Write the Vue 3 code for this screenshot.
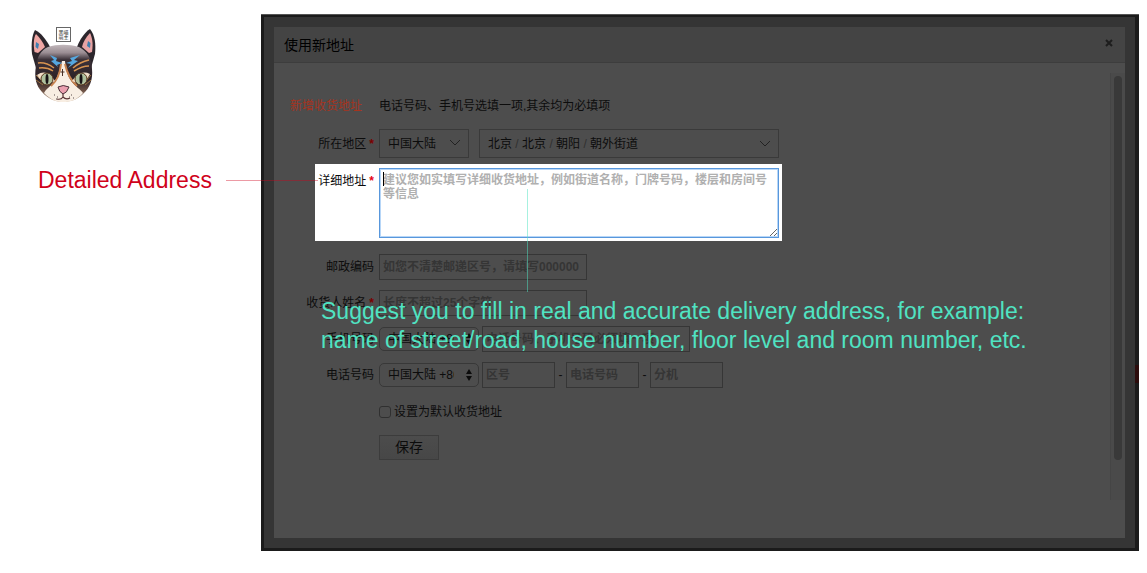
<script setup>
import { ref } from 'vue'

const region = ref('cn')
const mobileCode = ref('86')
const phoneCode = ref('86')
const address = ref('')
const zip = ref('')
const receiver = ref('')
const mobile = ref('')
const asDefault = ref(false)
const area = ['北京', '北京', '朝阳', '朝外街道']
const phoneParts = [
  { id: 'area-code', hint: '区号' },
  { id: 'phone-number', hint: '电话号码' },
  { id: 'extension', hint: '分机' },
]
</script>

<template>
  <div class="page">
    <aside class="side">
      <svg class="logo" viewBox="0 0 90 90" role="img" aria-label="logo">
        <defs>
          <linearGradient id="fur" x1="0" y1="0" x2="0" y2="1">
            <stop offset="0" stop-color="#c2b8bc" />
            <stop offset="0.14" stop-color="#9a8d93" />
            <stop offset="0.26" stop-color="#3c3239" />
            <stop offset="0.6" stop-color="#2b2026" />
            <stop offset="0.8" stop-color="#6b5044" />
            <stop offset="1" stop-color="#d9c4ae" />
          </linearGradient>
        </defs>
        <path d="M12 34C11 24 12 15 15 10C21 13 26 19 30 27L24 40L16 48Z" fill="#2c262c" />
        <path d="M14.500 32C13 23 14 17 16 14C20 18 23 22 25 27L18 33Z" fill="#efa6a4" />
        <path d="M16 22L19 24L18 29L15.500 27Z" fill="#3f7fb0" />
        <path d="M75 34C76 24 75 15 70 9C65 12 60 19 57 27L63 40L71 48Z" fill="#2c262c" />
        <path d="M72 32C73.500 23 72 17 70 13C66 17 63 22 62 27L69 33Z" fill="#e8a3a4" />
        <path d="M68 21L70.500 23L70 28L67 26Z" fill="#3f7fb0" />
        <path d="M28 27C37 24 49 24 59 27C67 31 72 39 72 49C73 59 70 68 63 74C57 80 50 82 43 82C36 82 28 79 22 72C16 66 14 57 16 46C17 37 21 30 28 27Z" fill="url(#fur)" />
        <path d="M42 41C40 50 38 57 33 64C29 67 26 69 24 73C31 80 37 82 43 82C50 82 57 80 63 73C60 69 56 67 52 62C47 55 46 49 45 41Z" fill="#f8eee3" />
        <path d="M41 44C40 54 37 61 31 66M45 44C47 53 50 60 57 66" fill="none" stroke="#c88350" stroke-width="2" />
        <path d="M30 35L37 38L36 41L42 43L37 45L38 47L31 41L34 40Z" fill="#55a7df" />
        <path d="M60 35L50 38L52 41L46 43L51 44L48 48L58 41L54 40Z" fill="#55a7df" />
        <path d="M34 48Q26 42 18 43M33 51Q27 47 19 48M53 48Q60 42 69 40M54 51Q62 46 69 46" fill="none" stroke="#d79350" stroke-width="1.500" />
        <path d="M16 55L22 61M16 60L23 65M71 55L66 61M71 60L65 65" stroke="#9a713f" stroke-width="1" />
        <path d="M17 55Q27 48 35 61Q25 68 17 55Z" fill="#f1ddc7" />
        <path d="M52 61Q60 49 70 54Q64 67 52 61Z" fill="#f1ddc7" />
        <circle cx="27" cy="59" r="6" fill="#aebf9d" stroke="#57381f" stroke-width="1" />
        <circle cx="61" cy="59" r="6" fill="#aebf9d" stroke="#57381f" stroke-width="1" />
        <ellipse cx="27" cy="59" rx="1.500" ry="5" fill="#171214" />
        <ellipse cx="61" cy="59" rx="1.500" ry="5" fill="#171214" />
        <path d="M42.500 49V56M40.500 52H44.500" stroke="#493127" stroke-width="1" />
        <path d="M38 67Q43 64 49 67Q47 73 43 74Q39 72 38 67Z" fill="#eaa0af" stroke="#493038" stroke-width="1" />
        <path d="M43 74V77M37 79Q41 80 43 77Q46 80 50 78" fill="none" stroke="#5a3537" stroke-width="1.200" />
        <path d="M34 75H35M37 77H38M36 79H37M51 75H52M53 78H54M49 77H50" stroke="#594b4b" stroke-width="1" />
        <rect x="36.500" y="7.500" width="14" height="14" fill="#fff" stroke="#666" />
        <text x="43.500" y="14" class="seal">黑喵</text>
        <text x="43.500" y="19" class="seal">萌主</text>
      </svg>
      <div class="callout">
        <span class="callout-text">Detailed Address</span>
        <span class="callout-line"></span>
      </div>
    </aside>

    <main class="backdrop">
      <span class="stray"></span>
      <section class="dialog">
        <header class="dialog-head">
          <h1>使用新地址</h1>
          <button class="close" type="button" aria-label="关闭">
            <svg viewBox="0 0 8 8" width="8" height="8"><path d="M1 1L7 7M7 1L1 7" stroke="#1d1d1d" stroke-width="2" /></svg>
          </button>
        </header>
        <div class="dialog-body">
          <form class="form" @submit.prevent>
            <p class="intro"><span class="intro-tag">新增收货地址</span><span>电话号码、手机号选填一项,其余均为必填项</span></p>

            <div class="row region">
              <label for="region">所在地区<i>*</i></label>
              <div class="fields wide">
                <span class="picker">
                  <select id="region" v-model="region"><option value="cn">中国大陆</option></select>
                  <svg class="chevron" viewBox="0 0 12 7" width="12" height="7"><path d="M1 1L6 6L11 1" /></svg>
                </span>
                <button class="area" type="button">
                  <span><template v-for="(a, i) in area" :key="i"><em v-if="i"> / </em>{{ a }}</template></span>
                  <svg class="chevron" viewBox="0 0 12 7" width="12" height="7"><path d="M1 1L6 6L11 1" /></svg>
                </button>
              </div>
            </div>

            <div class="row detail">
              <label for="address">详细地址<i>*</i></label>
              <div class="detail-field">
                <textarea id="address" v-model="address" placeholder="建议您如实填写详细收货地址，例如街道名称，门牌号码，楼层和房间号等信息"></textarea>
                <span class="caret"></span>
                <span class="note-line"></span>
              </div>
              <p class="note">Suggest you to fill in real and accurate delivery address, for example:<br />name of street/road, house number, floor level and room number, etc.</p>
            </div>

            <div class="row">
              <label for="zip">邮政编码</label>
              <div class="fields"><input id="zip" v-model="zip" type="text" placeholder="如您不清楚邮递区号，请填写000000" /></div>
            </div>
            <div class="row">
              <label for="receiver">收货人姓名<i>*</i></label>
              <div class="fields"><input id="receiver" v-model="receiver" type="text" placeholder="长度不超过25个字符" /></div>
            </div>
            <div class="row">
              <label for="mobile">手机号码</label>
              <div class="fields">
                <span class="code">
                  <select v-model="mobileCode" aria-label="手机国家代码"><option value="86">中国大陆 +86</option></select>
                  <svg viewBox="0 0 6 12" width="6" height="12"><path d="M3 0L6 5H0ZM0 7H6L3 12Z" /></svg>
                </span>
                <input id="mobile" v-model="mobile" type="text" placeholder="电话号码、手机号码必须填一项" />
              </div>
            </div>
            <div class="row">
              <label for="area-code">电话号码</label>
              <div class="fields">
                <span class="code">
                  <select v-model="phoneCode" aria-label="电话国家代码"><option value="86">中国大陆 +86</option></select>
                  <svg viewBox="0 0 6 12" width="6" height="12"><path d="M3 0L6 5H0ZM0 7H6L3 12Z" /></svg>
                </span>
                <template v-for="(p, i) in phoneParts" :key="p.id">
                  <span v-if="i" class="dash">-</span>
                  <input :id="p.id" class="short" type="text" :placeholder="p.hint" :aria-label="p.hint" />
                </template>
              </div>
            </div>
            <div class="default">
              <input id="default" v-model="asDefault" type="checkbox" />
              <label for="default">设置为默认收货地址</label>
            </div>
            <button class="save" type="submit">保存</button>
          </form>
          <div class="track"><div class="thumb"></div></div>
        </div>
      </section>
    </main>
  </div>
</template>

<style>
body {
  margin: 0;
  background: #fff;
}
</style>

<style scoped>
* {
  box-sizing: border-box;
}
.page {
  display: flex;
  min-height: 100vh;
  font: 12px/20px "Liberation Sans", "Noto Sans CJK SC", sans-serif;
  color: #0c0c0c;
}
button, input, select, textarea {
  font: inherit;
  color: inherit;
  margin: 0;
  border-radius: 0;
  outline: none;
}
.side {
  flex: 0 0 261px;
  padding-top: 20px;
}
.logo {
  display: block;
  width: 90px;
  height: 90px;
  margin-left: 20px;
}
.seal {
  font: 5px "Noto Sans CJK SC", sans-serif;
  text-anchor: middle;
  fill: #222;
}
.callout {
  position: relative;
  z-index: 3;
  display: flex;
  align-items: center;
  gap: 14px;
  margin: 56px -57px 0 38px;
}
.callout-text {
  font-size: 23px;
  line-height: 29px;
  color: #d0021b;
  white-space: nowrap;
}
.callout-line {
  flex: 1;
  height: 1px;
  background: rgba(208, 2, 27, 0.4);
}
.backdrop {
  position: relative;
  flex: 1;
  display: flex;
  min-width: 0;
  margin: 14px 8px 22px 0;
  padding: 2px 4px 3px 3px;
  background: #1b1b1b;
  border-top: 1px solid #555;
}
.stray {
  position: absolute;
  right: 0;
  top: 350px;
  width: 4px;
  height: 18px;
  background: #2c0c0c;
}
.dialog {
  flex: 1;
  display: flex;
  flex-direction: column;
  min-width: 0;
  border: 10px solid #353535;
  background: #4d4d4d;
}
.dialog-head {
  display: flex;
  align-items: center;
  justify-content: space-between;
  height: 36px;
  padding: 0 12px 0 10px;
  background: #444;
  border-bottom: 1px solid #3d3d3d;
}
.dialog-head h1 {
  margin: 0;
  font-size: 14px;
  font-weight: 400;
  color: #000;
}
.close {
  display: flex;
  padding: 0;
  margin-bottom: 3px;
  border: 0;
  background: none;
}
.dialog-body {
  flex: 1;
  display: flex;
}
.form {
  flex: 1;
  min-width: 0;
  padding-top: 33px;
}
.intro {
  display: flex;
  gap: 17px;
  margin: 0 0 13px 16px;
}
.intro-tag {
  color: #a5341f;
}
.row {
  display: grid;
  grid-template-columns: 100px auto;
  justify-content: start;
  align-items: center;
  column-gap: 5px;
  margin-bottom: 10px;
}
.row > label {
  text-align: right;
  white-space: nowrap;
}
.row i {
  margin-left: 3px;
  font-style: normal;
  font-weight: bold;
  color: #7a0000;
}
.fields {
  display: flex;
  align-items: center;
  gap: 3px;
}
.wide {
  gap: 10px;
}
.region {
  margin-bottom: 6px;
}
.picker, .code {
  position: relative;
  display: flex;
}
select {
  appearance: none;
}
.picker select {
  width: 90px;
  height: 29px;
  padding: 0 24px 0 8px;
  border: 1px solid #3a3a3a;
  background: #4d4d4d;
}
.chevron {
  fill: none;
  stroke: #222;
  stroke-width: 1;
}
.picker .chevron {
  position: absolute;
  right: 8px;
  top: 10px;
  pointer-events: none;
}
.area {
  display: flex;
  align-items: center;
  justify-content: space-between;
  width: 300px;
  height: 29px;
  padding: 0 7px 0 8px;
  border: 1px solid #3a3a3a;
  background: none;
}
.area em {
  font-style: normal;
  color: #303030;
  white-space: pre;
}
.detail {
  position: relative;
  grid-template-columns: 59px auto;
  align-items: start;
  width: fit-content;
  margin: 0 0 13px 41px;
  padding: 4px 3px 3px 0;
  background: #fff;
}
.detail > label {
  padding-top: 3px;
}
.detail i {
  color: #e60012;
}
.detail-field {
  position: relative;
  display: flex;
}
textarea {
  width: 400px;
  height: 70px;
  padding: 4px 3px;
  border: 1px solid #5897dc;
  box-shadow: inset 0 0 0 1px #b7d6f7;
  background: #fff;
  line-height: 14px;
  resize: both;
}
textarea::placeholder {
  color: #b0b0b0;
  font-weight: bold;
}
.caret {
  position: absolute;
  left: 4px;
  top: 4px;
  width: 1px;
  height: 14px;
  background: #000;
}
.note-line {
  position: absolute;
  z-index: 3;
  left: 148px;
  top: 21px;
  width: 1px;
  height: 103px;
  background: rgba(80, 227, 194, 0.5);
}
.note {
  position: absolute;
  z-index: 3;
  left: 6px;
  top: 133px;
  margin: 0;
  font-size: 23px;
  line-height: 29px;
  white-space: nowrap;
  color: #50e3c2;
}
.fields input {
  width: 208px;
  height: 26px;
  padding: 0 3px;
  border: 1px solid #363636;
  background: none;
}
.fields .short {
  width: 73px;
}
.fields input::placeholder {
  color: #353535;
  font-weight: bold;
}
.code select {
  width: 100px;
  height: 24px;
  padding: 0 24px 0 8px;
  border: 1px solid #383838;
  border-radius: 5px;
  background: #4d4d4d;
}
.code svg {
  position: absolute;
  right: 7px;
  top: 6px;
  fill: #0c0c0c;
  pointer-events: none;
}
.dash {
  width: 5px;
  text-align: center;
}
.default {
  display: flex;
  align-items: center;
  gap: 3px;
  margin: 14px 0 13px 105px;
}
.default input {
  appearance: none;
  width: 12px;
  height: 12px;
  border: 1px solid #303030;
  border-radius: 3px;
}
.save {
  display: block;
  width: 60px;
  height: 25px;
  margin-left: 105px;
  padding: 0;
  border: 1px solid #3c3c3c;
  background: linear-gradient(#4c4c4c, #474747);
  font-size: 14px;
  line-height: 23px;
}
.track {
  width: 15px;
  margin: 10px 0 38px;
  padding: 3px 3px 40px;
  border-left: 1px solid #454545;
  background: #4a4a4a;
}
.thumb {
  height: 100%;
  width: 8px;
  border-radius: 4px;
  background: #393939;
}
</style>
